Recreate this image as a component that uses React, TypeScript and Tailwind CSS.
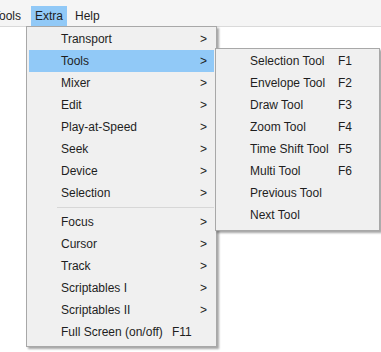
const mainItems: ({ label: string; sub?: boolean; key?: string } | 'sep')[] = [
  { label: 'Transport', sub: true },
  { label: 'Tools', sub: true },
  { label: 'Mixer', sub: true },
  { label: 'Edit', sub: true },
  { label: 'Play-at-Speed', sub: true },
  { label: 'Seek', sub: true },
  { label: 'Device', sub: true },
  { label: 'Selection', sub: true },
  'sep',
  { label: 'Focus', sub: true },
  { label: 'Cursor', sub: true },
  { label: 'Track', sub: true },
  { label: 'Scriptables I', sub: true },
  { label: 'Scriptables II', sub: true },
  { label: 'Full Screen (on/off)', key: 'F11' },
];

const toolItems = [
  { label: 'Selection Tool', key: 'F1' },
  { label: 'Envelope Tool', key: 'F2' },
  { label: 'Draw Tool', key: 'F3' },
  { label: 'Zoom Tool', key: 'F4' },
  { label: 'Time Shift Tool', key: 'F5' },
  { label: 'Multi Tool', key: 'F6' },
  { label: 'Previous Tool' },
  { label: 'Next Tool' },
];

export default function App() {
  return (
    <div
      className="relative w-[381px] h-[352px] bg-white overflow-hidden text-[12px] text-[#1e1e1e]"
      style={{ fontFamily: '"Liberation Sans", Arial, sans-serif' }}
    >
      {/* menu bar */}
      <div className="flex items-end h-[27px] bg-[#f5f5f5] border-b border-[#dadada] pl-[0px]">
        <div className="h-[20px] flex items-center ml-[-7px] pr-[10px]">Tools</div>
        <div className="h-[20px] flex items-center px-[4px] bg-[#91c9f7]">Extra</div>
        <div className="h-[20px] flex items-center px-[8px]">Help</div>
      </div>

      {/* Extra dropdown */}
      <div className="absolute left-[26px] top-[26px] w-[191px] bg-[#f0f0f0] border border-[#a8a8a8] pt-[1px] pb-[3px] px-[2px] shadow-[2px_2px_2px_rgba(0,0,0,0.35)]">
        {mainItems.map((it, i) =>
          it === 'sep' ? (
            <div key={i} className="h-[7px] flex items-center pl-[28px]">
              <div className="h-px w-full bg-[#d7d7d7]" />
            </div>
          ) : (
            <div
              key={i}
              className={`h-[22px] flex items-center pl-[32px] ${it.label === 'Tools' ? 'bg-[#91c9f7]' : ''}`}
            >
              <span className="w-[111px] whitespace-nowrap">{it.label}</span>
              <span className="w-[28px]">{it.key}</span>
              <span className="w-[14px]">{it.sub ? '>' : ''}</span>
            </div>
          )
        )}
      </div>

      {/* Tools submenu */}
      <div className="absolute left-[215px] top-[48px] w-[165px] bg-[#f0f0f0] border border-[#a8a8a8] pt-[1px] pb-[4px] px-[2px] shadow-[2px_2px_2px_rgba(0,0,0,0.35)]">
        {toolItems.map((it) => (
          <div key={it.label} className="h-[22px] flex items-center pl-[32px]">
            <span className="w-[88px] whitespace-nowrap">{it.label}</span>
            <span>{it.key}</span>
          </div>
        ))}
      </div>
    </div>
  );
}
